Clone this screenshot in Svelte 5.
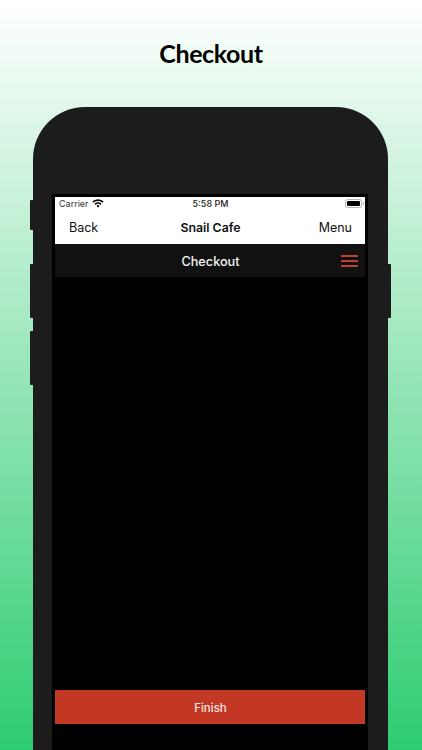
<script>
  let title = 'Checkout';
</script>

<div class="page">
  <h1>{title}</h1>

  <div class="phone">
    <span class="side-btn mute"></span>
    <span class="side-btn vol-up"></span>
    <span class="side-btn vol-down"></span>
    <span class="side-btn power"></span>

    <div class="screen">
      <div class="app">
        <div class="light-head">
          <div class="status">
            <div class="carrier">
              <span>Carrier</span>
              <svg width="12" height="9" viewBox="0 0 13 10">
                <path d="M6.5 0.4C4 0.4 1.9 1.4 0.3 3L1.5 4.3C2.8 3 4.5 2.2 6.5 2.2S10.2 3 11.5 4.3L12.7 3C11.1 1.4 9 0.4 6.5 0.4Z" fill="#111" />
                <path d="M6.5 3.6C5 3.6 3.6 4.2 2.6 5.3L3.8 6.6C4.5 5.8 5.4 5.4 6.5 5.4S8.5 5.8 9.2 6.6L10.4 5.3C9.4 4.2 8 3.6 6.5 3.6Z" fill="#111" />
                <path d="M6.5 6.8C5.8 6.8 5.2 7.1 4.8 7.6L6.5 9.6L8.2 7.6C7.8 7.1 7.2 6.8 6.5 6.8Z" fill="#111" />
              </svg>
            </div>
            <span class="time">5:58 PM</span>
            <div class="battery"><span class="charge"></span></div>
          </div>
          <nav class="nav">
            <span>Back</span>
            <strong>Snail Cafe</strong>
            <span class="menu">Menu</span>
          </nav>
        </div>

        <div class="dark-head">
          <span class="dark-title">Checkout</span>
          <div class="burger">
            <span></span>
            <span></span>
            <span></span>
          </div>
        </div>

        <div class="content"></div>

        <button class="finish">Finish</button>
      </div>
    </div>
  </div>
</div>

<style>
  :global(body) {
    margin: 0;
    background: #fff;
  }

  .page {
    width: 422px;
    height: 750px;
    overflow: hidden;
    display: flex;
    flex-direction: column;
    background: linear-gradient(180deg, #ffffff 0%, #2ecc71 100%);
    font-family: Inter, Roboto, "Liberation Sans", sans-serif;
  }

  h1 {
    margin: 0;
    padding: 35px 0 0;
    height: 107px;
    box-sizing: border-box;
    flex: none;
    text-align: center;
    font-family: Lato, "Open Sans", sans-serif;
    font-size: 25px;
    letter-spacing: -0.4px;
    line-height: 36px;
    font-weight: 700;
    color: #000;
  }

  .phone {
    position: relative;
    flex: none;
    width: 355px;
    height: 660px;
    margin-left: 33px;
    box-sizing: border-box;
    padding: 87px 0 0 19px;
    border-radius: 52px 52px 0 0;
    background: #1c1c1c;
  }

  .side-btn {
    position: absolute;
    width: 3px;
    background: #1c1c1c;
  }

  .mute {
    left: -3px;
    top: 93px;
    height: 30px;
    border-radius: 1px 0 0 1px;
  }

  .vol-up {
    left: -3px;
    top: 157px;
    height: 54px;
    border-radius: 1px 0 0 1px;
  }

  .vol-down {
    left: -3px;
    top: 224px;
    height: 54px;
    border-radius: 1px 0 0 1px;
  }

  .power {
    right: -3px;
    top: 157px;
    height: 54px;
    border-radius: 0 1px 1px 0;
  }

  .screen {
    width: 316px;
    height: 573px;
    box-sizing: border-box;
    padding: 3px;
    background: #000;
  }

  .app {
    height: 100%;
    display: flex;
    flex-direction: column;
  }

  .light-head {
    height: 47px;
    background: #fff;
    color: #111;
  }

  .status {
    height: 13px;
    display: grid;
    grid-template-columns: 1fr auto 1fr;
    align-items: center;
    padding: 0 3px 0 4px;
    font-size: 9px;
  }

  .carrier {
    display: flex;
    align-items: center;
    gap: 3px;
    color: #333;
  }

  .time {
    font-weight: 500;
    color: #222;
  }

  .battery {
    position: relative;
    justify-self: end;
    width: 17px;
    height: 9px;
    padding: 1px;
    border: 1px solid #b5b5b5;
    border-radius: 2.5px;
    box-sizing: border-box;
    display: flex;
  }

  .battery::after {
    content: '';
    position: absolute;
    right: -3px;
    top: 1.5px;
    width: 1px;
    height: 3px;
    background: #b5b5b5;
  }

  .charge {
    flex: 1;
    background: #000;
    border-radius: 1px;
  }

  .nav {
    height: 34px;
    display: grid;
    grid-template-columns: 1fr auto 1fr;
    align-items: center;
    padding: 0 13px 0 14px;
    font-size: 12.5px;
  }

  .nav strong {
    font-weight: 600;
    font-size: 12.3px;
    color: #111;
  }

  .menu {
    text-align: right;
  }

  .dark-head {
    position: relative;
    height: 33px;
    flex: none;
    box-sizing: border-box;
    display: flex;
    align-items: center;
    justify-content: center;
    padding: 1px 0 0 1px;
    background: #111;
  }

  .dark-title {
    color: #f4f4f4;
    font-size: 12.7px;
    font-weight: 500;
  }

  .burger {
    position: absolute;
    right: 7px;
    top: 11px;
    width: 17px;
    display: flex;
    flex-direction: column;
    gap: 3px;
  }

  .burger span {
    height: 2px;
    background: #bc4130;
  }

  .content {
    flex: 1;
  }

  .finish {
    flex: none;
    height: 34px;
    margin-bottom: 40px;
    border: none;
    padding: 2px 0 0 1px;
    background: #c23824;
    color: #f6e4e0;
    font-family: inherit;
    font-size: 11.5px;
    font-weight: 500;
  }
</style>
